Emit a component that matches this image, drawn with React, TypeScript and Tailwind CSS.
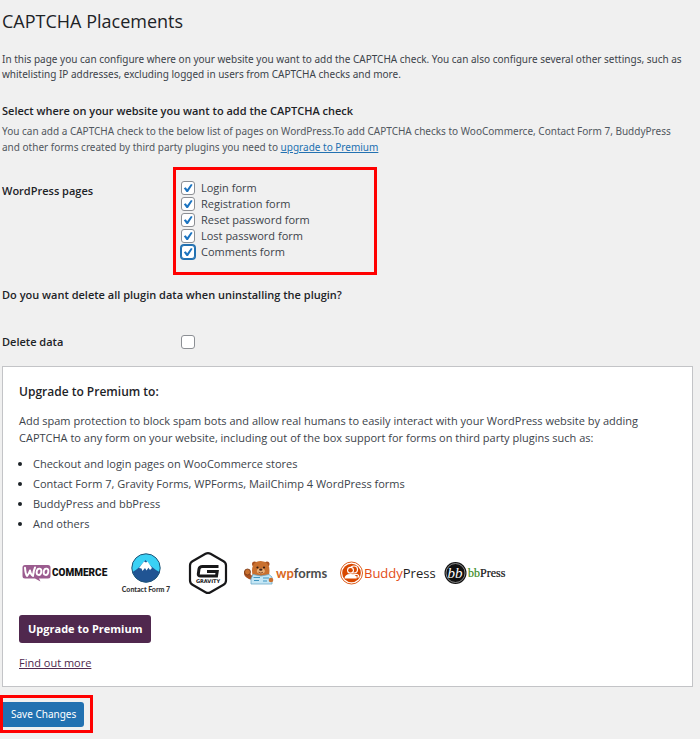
import { useState } from 'react';

const pages = ['Login form', 'Registration form', 'Reset password form', 'Lost password form', 'Comments form'];

const premiumFeatures = [
  'Checkout and login pages on WooCommerce stores',
  'Contact Form 7, Gravity Forms, WPForms, MailChimp 4 WordPress forms',
  'BuddyPress and bbPress',
  'And others',
];

function Checkbox({ id, checked, active, onChange }: {
  id: string;
  checked: boolean;
  active?: boolean;
  onChange: () => void;
}) {
  return (
    <span className="grid w-[14px] shrink-0 place-items-center">
      <input
        id={id}
        type="checkbox"
        checked={checked}
        onChange={onChange}
        className={`col-start-1 row-start-1 size-[14px] appearance-none rounded-[3px] border bg-white ${
          active ? 'border-[#2271b1] ring-1 ring-[#2271b1]' : 'border-[#8c8f94]'
        }`}
      />
      {checked && (
        <svg viewBox="0 0 14 14" className="pointer-events-none z-10 col-start-1 row-start-1 size-[14px]">
          <path d="M2.800 7.200 L4.700 6.200 L6.200 8.300 L10 2.900 L11.600 3.800 L7 11 L5.500 11 Z" fill="#1c74c0" />
        </svg>
      )}
    </span>
  );
}

function WooCommerceLogo() {
  return (
    <svg viewBox="0 0 86 20" className="h-5 w-[86px]" role="img" aria-label="WooCommerce">
      <path d="M3 2 H26 Q28.500 2 28.500 4.500 V13 Q28.500 15.500 26 15.500 H17 L18.500 18.500 L13 15.500 H3 Q0.500 15.500 0.500 13 V4.500 Q0.500 2 3 2 Z" fill="#9b5c8f" />
      <path d="M3 4.800 Q3.500 11 5 13 Q7 11 8 7.500 Q8.500 11.500 11 13 Q11.500 7.500 13 4.500" fill="none" stroke="#fff" strokeWidth="2" strokeLinecap="round" strokeLinejoin="round" />
      <ellipse cx="17" cy="8.800" rx="2.300" ry="3.200" transform="rotate(12 17 8.800)" fill="none" stroke="#fff" strokeWidth="1.900" />
      <ellipse cx="24" cy="8.800" rx="2.300" ry="3.200" transform="rotate(12 24 8.800)" fill="none" stroke="#fff" strokeWidth="1.900" />
      <text x="30" y="13" fontFamily="Roboto, sans-serif" fontSize="10" fontWeight="900" fill="#111">COMMERCE</text>
    </svg>
  );
}

function ContactFormLogo() {
  return (
    <svg viewBox="0 0 52 44" className="h-11 w-[52px]" role="img" aria-label="Contact Form 7">
      <circle cx="26" cy="17" r="14.200" fill="#3ad1f5" />
      <path d="M12.500 21 Q18 18.500 25.500 9 Q32 17.500 39.600 21 A14 14 0 0 1 12.500 21 Z" fill="#205493" />
      <path d="M19 17 L24 10.500 L26 11.500 L27.500 10.500 L32 17 L30 19 L28.500 16.800 L26.500 19.500 L25 17 L22.500 20 L21.500 17.500 Z" fill="#fff" />
      <circle cx="26" cy="17" r="14.200" fill="none" stroke="#205477" strokeWidth="1" />
      <text x="26" y="41" textAnchor="middle" fontFamily="Lato, sans-serif" fontSize="7" fontWeight="900" fill="#333">Contact Form 7</text>
    </svg>
  );
}

function GravityLogo() {
  return (
    <svg viewBox="0 0 40 44" className="h-11 w-10" role="img" aria-label="Gravity">
      <path d="M17.500 2.800 Q20 1.400 22.500 2.800 L35.500 10.300 Q38 11.700 38 14.500 V29.500 Q38 32.300 35.500 33.700 L22.500 41.200 Q20 42.600 17.500 41.200 L4.500 33.700 Q2 32.300 2 29.500 V14.500 Q2 11.700 4.500 10.300 Z" fill="none" stroke="#171719" strokeWidth="2.200" />
      <path d="M30.500 15.500 H14.500 Q11.500 15.500 11 18 L10.300 23 Q10 25 12.500 25 H28.500 L29.200 20.500 H19" fill="none" stroke="#171719" strokeWidth="3" />
      <text x="20" y="32" textAnchor="middle" fontFamily="DejaVu Sans, sans-serif" fontSize="5" fontWeight="700" fill="#171719">GRAVITY</text>
    </svg>
  );
}

function WpFormsLogo() {
  return (
    <svg viewBox="0 0 84 26" className="h-[26px] w-[84px]" role="img" aria-label="WPForms">
      <circle cx="10.500" cy="4" r="2.500" fill="#a8501f" />
      <circle cx="23" cy="4" r="2.500" fill="#a8501f" />
      <path d="M8 11 Q8 1 16.800 1 Q25.500 1 25.500 11 L25 16 H8.500 Z" fill="#c9702f" />
      <path d="M4 10 Q-1 10 0 14 Q1 18 8 20 L9 16 Q6 15 6 12 Z" fill="#a8501f" />
      <circle cx="3.500" cy="12" r="3" fill="#c9702f" stroke="#733719" strokeWidth="0.800" />
      <circle cx="13.500" cy="7.500" r="1.100" fill="#351e14" />
      <circle cx="20" cy="7.500" r="1.100" fill="#351e14" />
      <ellipse cx="16.800" cy="11" rx="4" ry="2.700" fill="#e9b078" />
      <ellipse cx="16.800" cy="9.700" rx="1.700" ry="1.100" fill="#4a2516" />
      <path d="M14.500 12.200 Q16.800 14 19 12.200" fill="none" stroke="#733719" strokeWidth="0.800" />
      <path d="M9 14.500 L17 16 L25 14.500 L28 17 V24 H7 V19 Z" fill="#c3e6f5" stroke="#6aa7c6" strokeWidth="0.800" />
      <path d="M9.500 17.500 H16 M10 20.500 H15 M19 18 H25 M19 21 H23" stroke="#3e94bf" strokeWidth="1.200" />
      <circle cx="27" cy="20" r="2.300" fill="#c9702f" />
      <text x="32" y="18" fontFamily="Lato, sans-serif" fontSize="13" fontWeight="700" fill="#d9681d">
        wp<tspan fill="#4c4c4c">forms</tspan>
      </text>
    </svg>
  );
}

function BuddyPressLogo() {
  return (
    <svg viewBox="0 0 96 26" className="h-[26px] w-24" role="img" aria-label="BuddyPress">
      <circle cx="11.500" cy="13" r="11" fill="#fff" stroke="#d84800" strokeWidth="0.900" />
      <circle cx="11.500" cy="13" r="9.300" fill="#d84800" />
      <circle cx="14" cy="9.500" r="3.500" fill="#d84800" stroke="#fff" strokeWidth="1.200" />
      <path d="M13 15 Q18.500 13 19 17 H15" fill="none" stroke="#fff" strokeWidth="1.200" />
      <circle cx="10.500" cy="10.300" r="3.500" fill="#fff" />
      <circle cx="10.500" cy="10.300" r="2.300" fill="#d84800" />
      <path d="M4.500 18.500 Q5 13.800 10.500 14 Q16 13.800 16.800 18.500 Z" fill="#fff" />
      <text x="24" y="18" fontFamily="Open Sans, sans-serif" fontSize="13" fill="#e34c13">
        Buddy<tspan fill="#222">Press</tspan>
      </text>
    </svg>
  );
}

function BbPressLogo() {
  return (
    <svg viewBox="0 0 64 24" className="h-6 w-16" role="img" aria-label="bbPress">
      <circle cx="11.500" cy="12" r="11" fill="#111" />
      <circle cx="11.500" cy="12" r="9.500" fill="none" stroke="#bbb" strokeWidth="0.700" />
      <text x="11" y="17" textAnchor="middle" fontFamily="Liberation Serif, serif" fontSize="15" fontStyle="italic" fill="#fff">bb</text>
      <text x="24" y="16" fontFamily="Liberation Serif, serif" fontSize="12" fill="#3a8b24" stroke="#3a8b24" strokeWidth="0.200">
        bb<tspan fill="#111" stroke="#111">Press</tspan>
      </text>
    </svg>
  );
}

export default function App() {
  const [selected, setSelected] = useState<string[]>(pages);
  const [deleteData, setDeleteData] = useState(false);

  const togglePage = (page: string) => {
    setSelected((prev) => (prev.includes(page) ? prev.filter((p) => p !== page) : [...prev, page]));
  };

  return (
    <main className="min-h-screen bg-[#f0f0f0] pt-[7px] pb-[6px] font-['Open_Sans',sans-serif] text-[11px] leading-4 text-[#3c434a]">
      <form onSubmit={(e) => e.preventDefault()}>
        <div className="px-[2px]">
          <h1 className="text-[18px] leading-7 text-[#1d2327]">CAPTCHA Placements</h1>
          <p className="mt-[17px] max-w-[686px] font-['Noto_Sans',sans-serif] text-[10px] leading-[15px]">
            In this page you can configure where on your website you want to add the CAPTCHA check. You can also configure several other settings, such as whitelisting IP addresses, excluding logged in users from CAPTCHA checks and more.
          </p>

          <h2 className="mt-[21px] font-semibold text-[#1d2327]">Select where on your website you want to add the CAPTCHA check</h2>
          <p className="mt-1 max-w-[686px] font-['Noto_Sans',sans-serif] text-[10px] leading-4 text-[#50575e]">
            You can add a CAPTCHA check to the below list of pages on WordPress.To add CAPTCHA checks to WooCommerce, Contact Form 7, BuddyPress and other forms created by third party plugins you need to{' '}
            <a href="#premium" className="text-[#2271b1] underline">upgrade to Premium</a>
          </p>

          <div role="group" aria-labelledby="pages-label" className="mt-3 flex items-start">
            <div id="pages-label" className="w-[171px] pt-4 font-semibold text-[#1d2327]">WordPress pages</div>
            <div className="h-[108px] w-[204px] border-3 border-[#ff0000] pt-[10px] pl-[5px]">
              {pages.map((page) => {
                const id = page.toLowerCase().replaceAll(' ', '-');
                return (
                  <div key={page} className="flex h-4 items-center">
                    <Checkbox
                      id={id}
                      checked={selected.includes(page)}
                      active={page === 'Comments form'}
                      onChange={() => togglePage(page)}
                    />
                    <label htmlFor={id} className="pl-[6px]">{page}</label>
                  </div>
                );
              })}
            </div>
          </div>

          <h2 className="mt-3 font-semibold text-[#1d2327]">Do you want delete all plugin data when uninstalling the plugin?</h2>
          <div className="mt-[31px] flex items-center">
            <label htmlFor="delete-data" className="w-[179px] font-semibold text-[#1d2327]">Delete data</label>
            <Checkbox id="delete-data" checked={deleteData} onChange={() => setDeleteData(!deleteData)} />
          </div>
        </div>

        <section id="premium" className="mt-4 mr-[7px] ml-[2px] border border-[#c3c4c7] bg-white px-4 pt-4 pb-[15px]">
          <h3 className="text-[12px] leading-[18px] font-semibold text-[#1d2327]">Upgrade to Premium to:</h3>
          <p className="mt-[11px] max-w-[620px] leading-[17px]">
            Add spam protection to block spam bots and allow real humans to easily interact with your WordPress website by adding CAPTCHA to any form on your website, including out of the box support for forms on third party plugins such as:
          </p>
          <ul className="mt-2 list-disc pl-[14px] leading-5 marker:text-[#1d2327]">
            {premiumFeatures.map((feature) => (
              <li key={feature}>{feature}</li>
            ))}
          </ul>

          <div className="mt-[17px] ml-[3px] flex items-center">
            <WooCommerceLogo />
            <div className="ml-3"><ContactFormLogo /></div>
            <div className="ml-4"><GravityLogo /></div>
            <div className="ml-4"><WpFormsLogo /></div>
            <div className="ml-3"><BuddyPressLogo /></div>
            <div className="ml-2"><BbPressLogo /></div>
          </div>

          <button type="button" className="mt-5 h-7 rounded-[3px] bg-[#50284e] px-[9px] font-bold text-white">Upgrade to Premium</button>
          <div className="mt-3">
            <a href="#more" className="font-medium text-[#50284e] underline">Find out more</a>
          </div>
        </section>

        <div className="mt-2 inline-flex h-[38px] w-[93px] items-center border-3 border-[#ff0000]">
          <button type="submit" className="h-[25px] rounded-r-[3px] bg-[#2271b1] px-2 font-['Noto_Sans',sans-serif] text-[10px] text-white">Save Changes</button>
        </div>
      </form>
    </main>
  );
}
